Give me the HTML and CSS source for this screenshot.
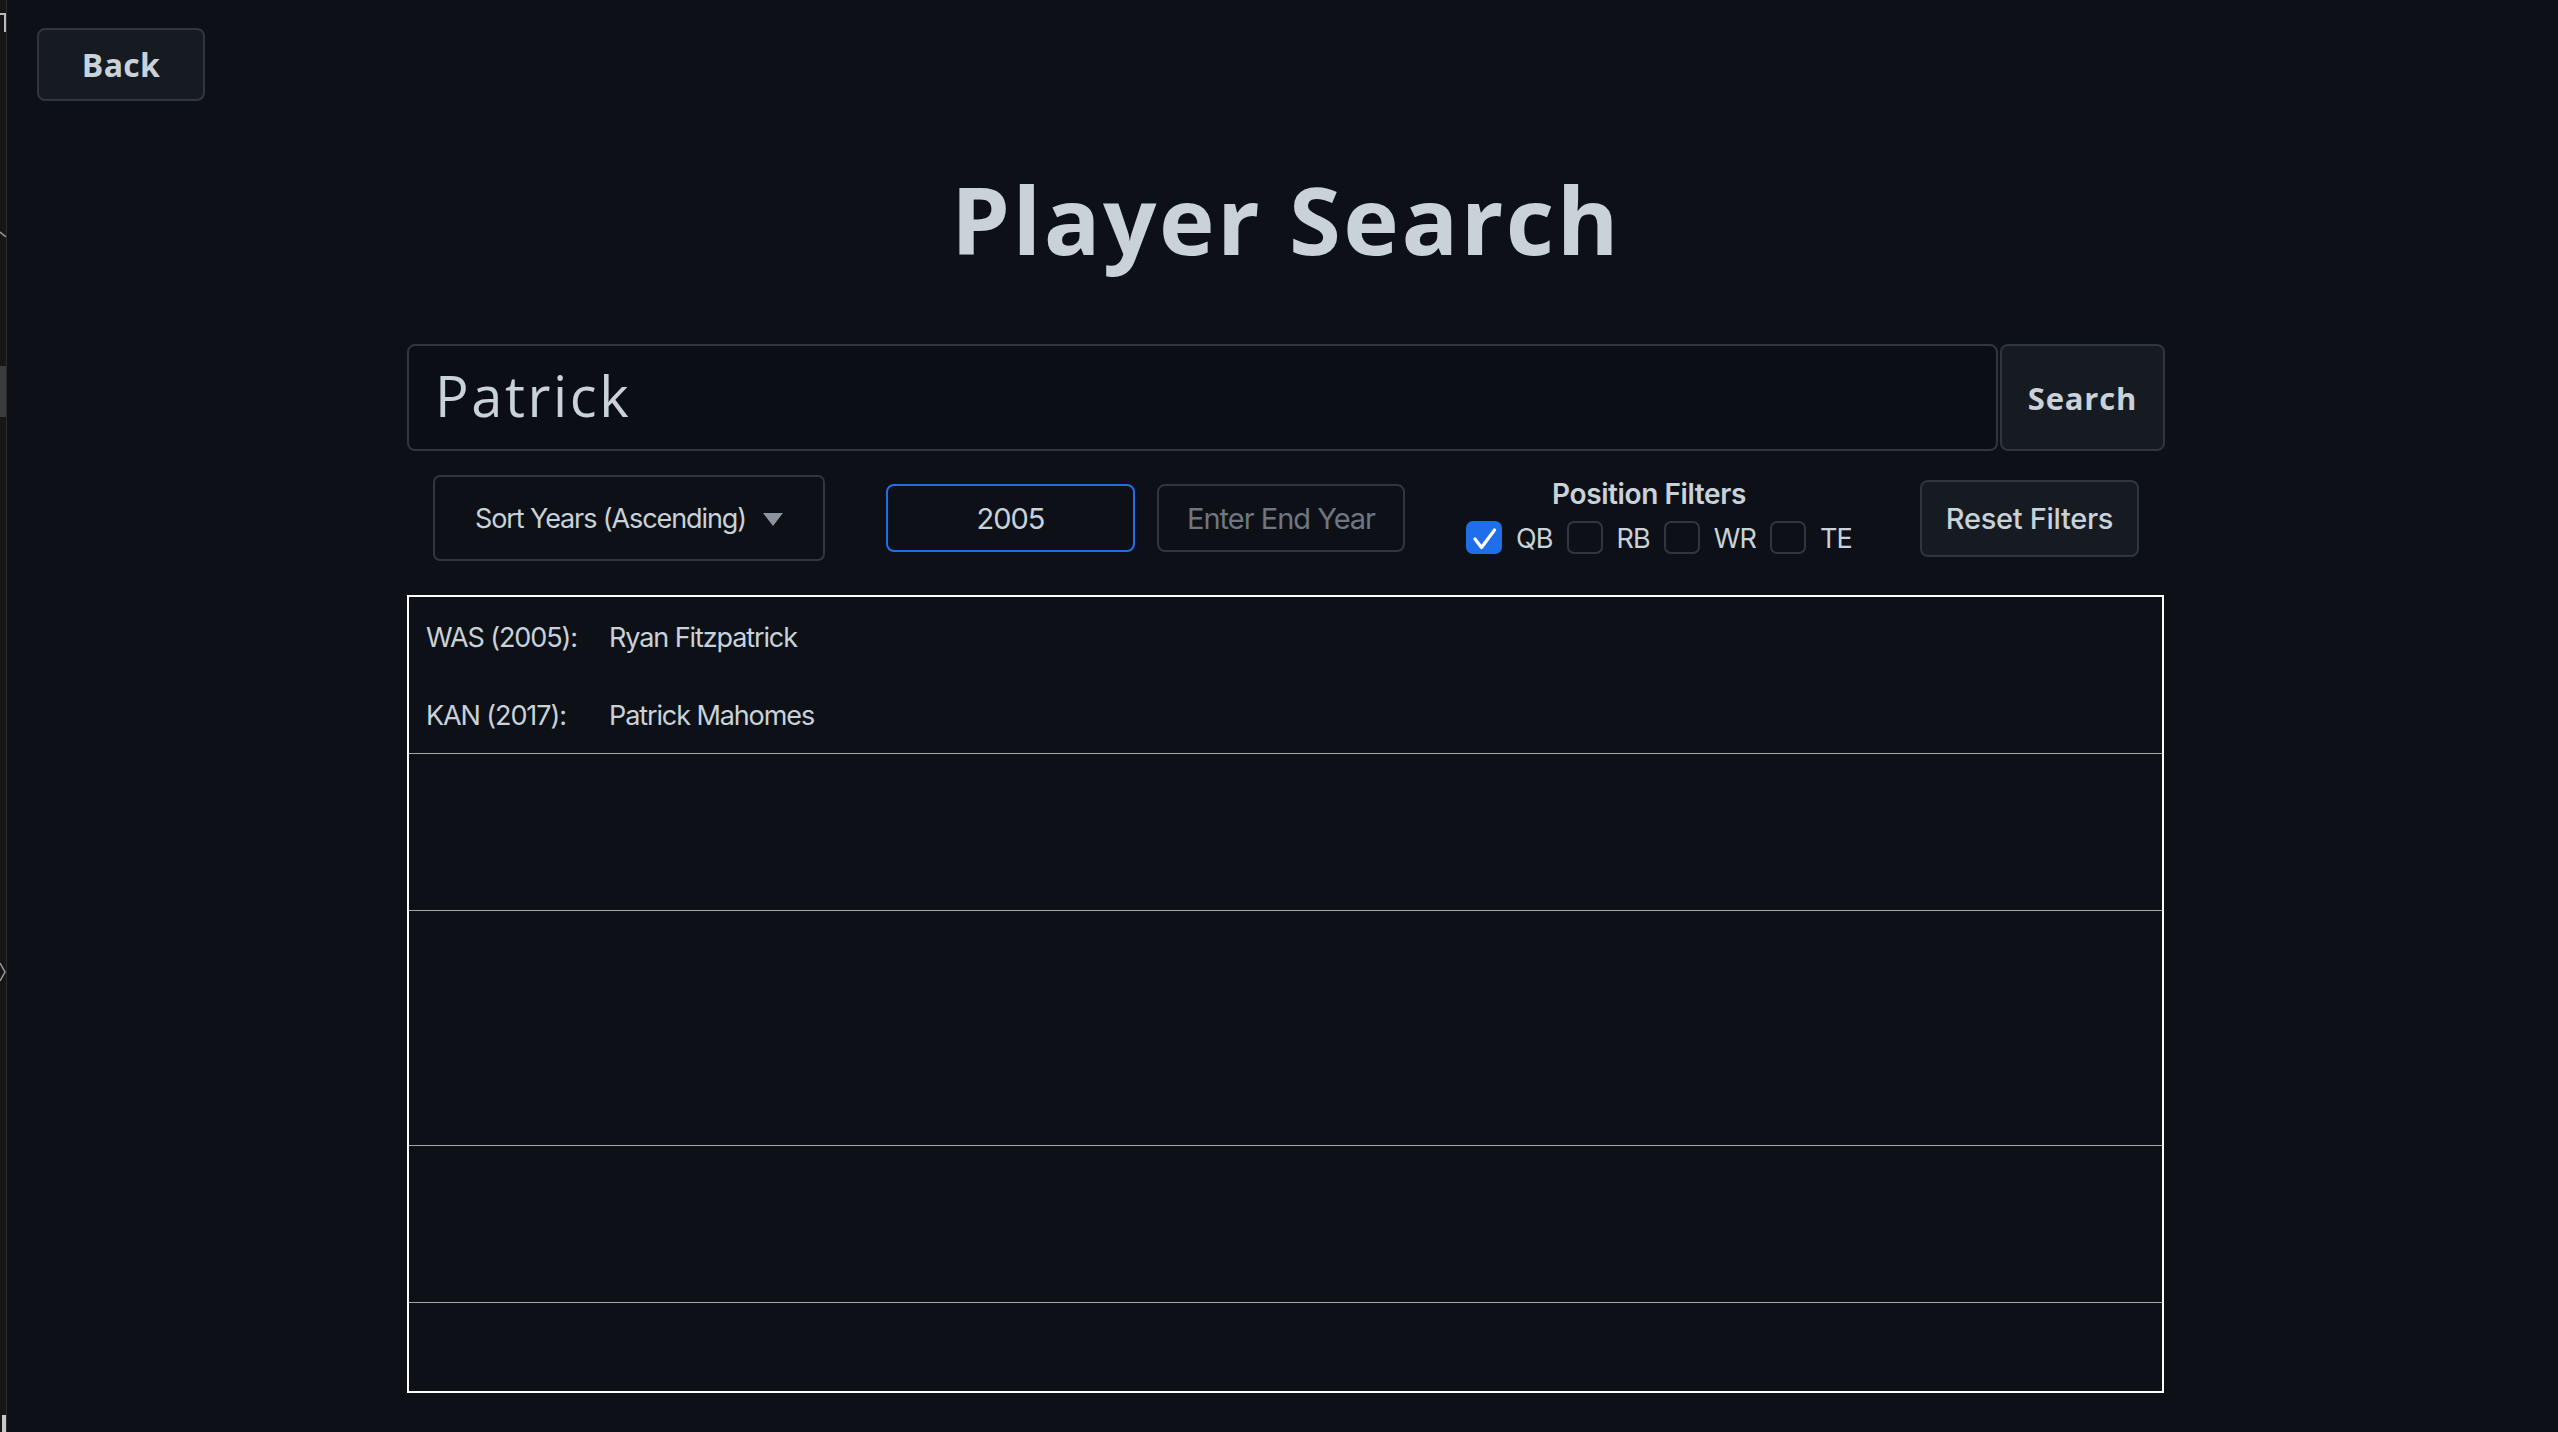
FILE: index.html
```html
<!DOCTYPE html>
<html lang="en">
<head>
<meta charset="utf-8">
<title>Player Search</title>
<link rel="stylesheet" href="styles.css">
</head>
<body>
<div class="app">
  <aside class="edge">
    <svg class="edge-marks" width="6" height="1432" viewBox="0 0 6 1432">
      <path d="M0 14 H5 V32" fill="none" stroke="#b9bbbe" stroke-width="2"/>
      <path d="M0 232 L6 237" fill="none" stroke="#9a9ca0" stroke-width="1.5"/>
      <rect x="0" y="366" width="6" height="51" fill="#3a3b3d"/>
      <path d="M0 963 L5 972 L0 981" fill="none" stroke="#9a9ca0" stroke-width="1.5"/>
      <rect x="2" y="1415" width="4" height="17" fill="#c8c8c8"/>
    </svg>
  </aside>
  <main class="page">
    <div class="topbar">
      <button class="btn back-btn">Back</button>
    </div>
    <h1 class="title">Player Search</h1>
    <div class="column">
      <div class="search-row">
        <input class="search-input" type="text" value="Patrick">
        <button class="btn search-btn">Search</button>
      </div>
      <div class="controls">
        <div class="sort-select">
          <span>Sort Years (Ascending)</span>
          <span class="caret"></span>
        </div>
        <input class="year-input start-year" type="text" value="2005">
        <input class="year-input end-year" type="text" placeholder="Enter End Year">
        <div class="filters">
          <div class="filters-title">Position Filters</div>
          <div class="checks">
            <span class="box checked">
              <svg width="36" height="32" viewBox="0 0 36 32"><polyline points="9,18 15.5,26.5 28.5,9" fill="none" stroke="#ffffff" stroke-width="3.2" stroke-linecap="round" stroke-linejoin="round"/></svg>
            </span>
            <span class="check-label">QB</span>
            <span class="box"></span>
            <span class="check-label">RB</span>
            <span class="box"></span>
            <span class="check-label">WR</span>
            <span class="box"></span>
            <span class="check-label">TE</span>
          </div>
        </div>
        <button class="btn reset-btn">Reset Filters</button>
      </div>
      <div class="results">
        <div class="group">
          <div class="entry"><span class="team">WAS (2005):</span><span class="name">Ryan Fitzpatrick</span></div>
          <div class="entry"><span class="team">KAN (2017):</span><span class="name">Patrick Mahomes</span></div>
        </div>
        <div class="group">
          <div class="entry"></div>
          <div class="entry"></div>
        </div>
        <div class="group">
          <div class="entry"></div>
          <div class="entry"></div>
          <div class="entry"></div>
        </div>
        <div class="group">
          <div class="entry"></div>
          <div class="entry"></div>
        </div>
        <div class="group">
          <div class="entry"></div>
          <div class="entry"></div>
        </div>
      </div>
    </div>
  </main>
</div>
</body>
</html>
```

FILE: styles.css
```css
* { box-sizing: border-box; }

html, body {
  margin: 0;
  padding: 0;
  background: #0d1117;
  height: 100%;
  overflow: hidden;
}

.app {
  display: flex;
  min-height: 1432px;
}

.edge {
  width: 7px;
  flex: 0 0 7px;
  background: #161616;
  border-right: 1px solid #2b2d31;
  position: relative;
}

.edge-marks {
  display: block;
}

.page {
  flex: 1;
  display: flex;
  flex-direction: column;
  padding-top: 28px;
  font-family: "Inter", "Liberation Sans", sans-serif;
  color: #c9d1d9;
}

.btn {
  background: #161b22;
  border: 2px solid #30363d;
  border-radius: 8px;
  color: #c9d1d9;
  cursor: pointer;
  padding: 0;
}

.topbar {
  padding-left: 30px;
  display: flex;
}

.back-btn {
  width: 168px;
  height: 73px;
  font-family: "Open Sans", "Liberation Sans", sans-serif;
  font-weight: 700;
  font-size: 32px;
  letter-spacing: 0.3px;
}

.title {
  margin: 71px 0 0;
  padding-left: 7px;
  text-align: center;
  font-family: "Open Sans", "Liberation Sans", sans-serif;
  font-weight: 700;
  font-size: 94px;
  line-height: 94px;
  letter-spacing: 2.5px;
  color: #c9d1d9;
}

.column {
  align-self: center;
  margin-left: 7px;
  width: 1758px;
  margin-top: 78px;
  display: flex;
  flex-direction: column;
}

.search-row {
  display: flex;
  gap: 2px;
  height: 107px;
}

.search-input {
  flex: 1;
  height: 107px;
  background: #0b0e14;
  border: 2px solid #30363d;
  border-radius: 8px;
  color: #c9d1d9;
  font-family: "Open Sans", "Liberation Sans", sans-serif;
  font-size: 56px;
  font-weight: 400;
  letter-spacing: 2.6px;
  padding: 0 0 6px 26px;
  outline: none;
}

.search-btn {
  width: 165px;
  height: 107px;
  font-family: "Open Sans", "Liberation Sans", sans-serif;
  font-weight: 700;
  font-size: 31px;
  letter-spacing: 0.8px;
}

.controls {
  display: flex;
  align-items: center;
  margin-top: 24px;
  height: 86px;
}

.sort-select {
  margin-left: 26px;
  width: 392px;
  height: 86px;
  border: 2px solid #30363d;
  border-radius: 7px;
  display: flex;
  align-items: center;
  justify-content: center;
  gap: 17px;
  font-size: 27px;
  letter-spacing: -1.1px;
  color: #c9d1d9;
}

.caret {
  width: 0;
  height: 0;
  border-left: 10px solid transparent;
  border-right: 10px solid transparent;
  border-top: 13px solid #8b949e;
  margin-top: 2px;
}

.year-input {
  height: 68px;
  border-radius: 8px;
  background: #0d1117;
  font-family: "Inter", "Liberation Sans", sans-serif;
  font-size: 29px;
  text-align: center;
  letter-spacing: -1px;
  color: #c9d1d9;
  outline: none;
  padding: 0;
}

.year-input::placeholder {
  color: #6e7681;
}

.start-year {
  margin-left: 61px;
  width: 249px;
  border: 2px solid #1f6feb;
}

.end-year {
  margin-left: 22px;
  width: 248px;
  border: 2px solid #30363d;
}

.filters {
  margin-left: 61px;
  width: 384px;
  display: flex;
  flex-direction: column;
  align-items: stretch;
}

.filters-title {
  text-align: center;
  padding-right: 18px;
  font-size: 28px;
  font-weight: 600;
  line-height: 32px;
  letter-spacing: -0.4px;
  margin-top: -3px;
  white-space: nowrap;
}

.checks {
  display: flex;
  align-items: center;
  margin-top: 9px;
}

.box {
  width: 36px;
  height: 33px;
  flex: 0 0 36px;
  border: 2px solid #30363d;
  border-radius: 7px;
  background: #0d1117;
  display: block;
}

.box.checked {
  background: #1f6feb;
  border-color: #1f6feb;
  position: relative;
}

.box.checked svg {
  position: absolute;
  left: -2px;
  top: -2px;
}

.check-label {
  margin: 0 14px 0 14px;
  padding-top: 4px;
  font-size: 27px;
  line-height: 32px;
  letter-spacing: -0.9px;
}

.check-label:last-child {
  margin-right: 0;
}

.reset-btn {
  margin-left: 70px;
  width: 219px;
  height: 77px;
  font-family: "Inter", "Liberation Sans", sans-serif;
  font-size: 29px;
  font-weight: 500;
  letter-spacing: -0.3px;
}

.results {
  margin-top: 34px;
  width: 1757px;
  height: 798px;
  border: 2px solid #ffffff;
  overflow: hidden;
}

.group {
  border-bottom: 1px solid #a4a8ad;
}

.entry {
  height: 78px;
  display: flex;
  align-items: center;
  padding: 2px 0 0 17px;
  font-size: 27px;
  letter-spacing: -1.1px;
  color: #c9d1d9;
}

.team {
  width: 183px;
  flex: 0 0 183px;
}
```
